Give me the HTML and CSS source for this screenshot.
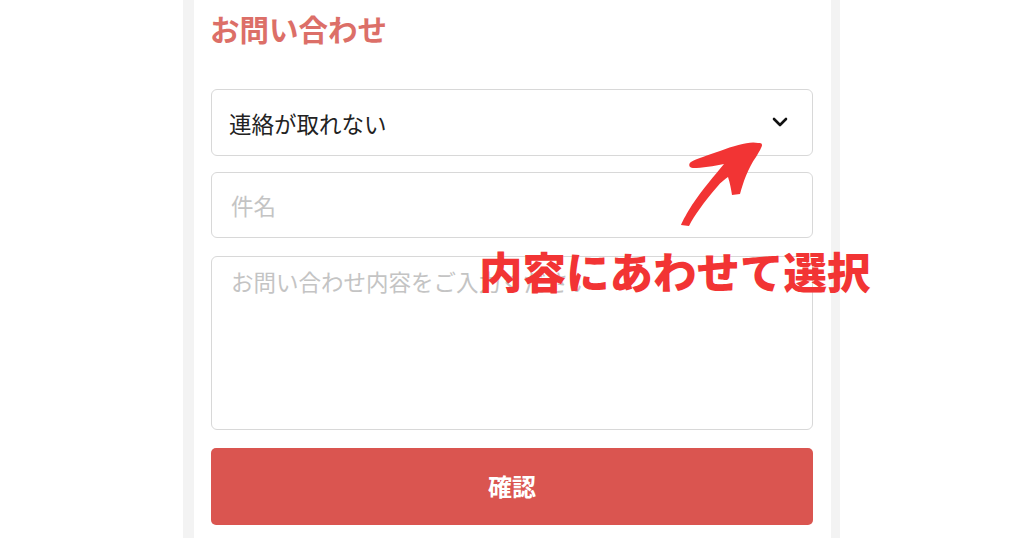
FILE: index.html
```html
<!DOCTYPE html>
<html lang="ja">
<head>
<meta charset="utf-8">
<title>お問い合わせ</title>
<link rel="stylesheet" href="styles.css">
</head>
<body>
<div class="page">
  <div class="frame">
    <h1 class="title">お問い合わせ</h1>
    <form class="form">
      <div class="select-wrap">
        <select class="field select">
          <option>連絡が取れない</option>
        </select>
        <svg class="chevron" width="16" height="10" viewBox="0 0 16 10"><path d="M2 2 L8 8 L14 2" fill="none" stroke="#111" stroke-width="2.6" stroke-linecap="round" stroke-linejoin="round"/></svg>
      </div>
      <input class="field input" type="text" placeholder="件名">
      <textarea class="field textarea" placeholder="お問い合わせ内容をご入力ください"></textarea>
      <button type="button" class="submit">確認</button>
    </form>
  </div>
  <svg class="arrow" width="100" height="95" viewBox="0 0 100 95">
    <path d="M88 8 C80 6 66 10 50 16 C38 20 26 24 21 27 C18 29 19 33 23 33 C32 33 44 31 54 29 C45 40 32 55 22 70 C17 78 13 85 11 90 L19 91 C24 81 34 67 47 52 C51 47 55 44 58 42 C60 48 61 54 62 60 L70 59 C73 48 78 33 86 22 C89 17 92 12 92 10 C92 8 90 8 88 8 Z" fill="#f23434"/>
  </svg>
  <div class="note">内容にあわせて選択</div>
</div>
</body>
</html>
```

FILE: styles.css
```css
* { box-sizing: border-box; }
html, body {
  margin: 0;
  padding: 0;
  background: #ffffff;
  font-family: "Noto Sans CJK JP", "Noto Sans", sans-serif;
}
.page {
  position: relative;
  width: 1024px;
  height: 538px;
  overflow: hidden;
}
.frame {
  margin-left: 183px;
  width: 657px;
  height: 538px;
  border-left: 11px solid #f3f3f3;
  border-right: 9px solid #f3f3f3;
  padding: 13px 18px 0 17px;
  background: #fff;
}
.title {
  margin: 0 0 0 -1px;
  font-size: 29.5px;
  line-height: 30px;
  font-weight: 700;
  color: #dc6f68;
}
.form {
  margin-top: 46px;
  display: flex;
  flex-direction: column;
}
.field {
  display: block;
  width: 100%;
  border: 1px solid #d8d8d8;
  border-radius: 6px;
  background: #fff;
  font-family: "Noto Sans CJK JP", "Noto Sans", sans-serif;
  font-size: 22.5px;
  color: #222;
  outline: none;
  margin: 0;
}
.select-wrap {
  position: relative;
}
.select {
  -webkit-appearance: none;
  appearance: none;
  height: 67px;
  padding: 0 50px 0 17px;
}
.chevron {
  position: absolute;
  right: 25px;
  top: 28px;
  pointer-events: none;
}
.input {
  margin-top: 16px;
  height: 66px;
  padding: 0 19px;
}
.textarea {
  margin-top: 18px;
  height: 174px;
  padding: 8px 19px;
  resize: none;
  line-height: 1.5;
}
.input::placeholder,
.textarea::placeholder {
  color: #c4c4c4;
}
.submit {
  margin-top: 18px;
  height: 77px;
  width: 100%;
  border: none;
  border-radius: 5px;
  background: #da5550;
  color: #fff;
  font-family: "Noto Sans CJK JP", "Noto Sans", sans-serif;
  font-size: 24px;
  font-weight: 700;
  padding: 0 0 3px;
}
.arrow {
  position: absolute;
  left: 670px;
  top: 135px;
}
.note {
  position: absolute;
  left: 479px;
  top: 246px;
  font-size: 43.5px;
  line-height: 50px;
  font-weight: 900;
  color: #f23434;
  letter-spacing: 0;
}
```
